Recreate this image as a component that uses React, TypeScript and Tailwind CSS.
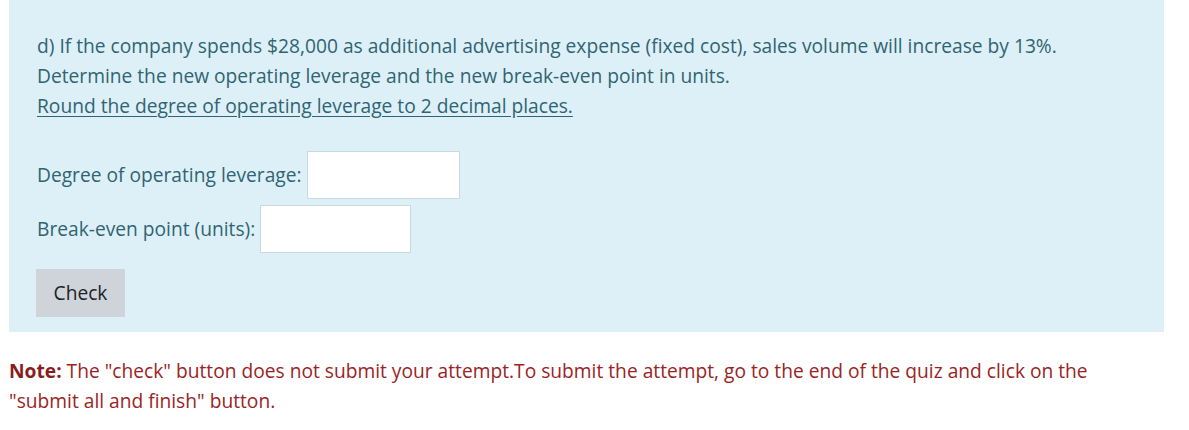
import React from 'react';

const App: React.FC = () => {
  return (
    <div className="w-[1189px] h-[430px] bg-white text-[19.2px]" style={{ fontFamily: '"Segoe UI", "Open Sans", sans-serif' }}>
      <div className="ml-[9px] w-[1155px] h-[332px] bg-[#def0f7] text-[#2f6473] pl-[28px] pt-[31px]">
        <p className="leading-[30px]">d) If the company spends $28,000 as additional advertising expense (fixed cost), sales volume will increase by 13%.</p>
        <p className="leading-[30px]">Determine the new operating leverage and the new break-even point in units.</p>
        <p className="leading-[30px] underline underline-offset-[3px]">Round the degree of operating leverage to 2 decimal places.</p>

        <div className="mt-[30px] flex items-center gap-[5px]">
          <span>Degree of operating leverage:</span>
          <input type="text" className="w-[153px] h-[48px] bg-white border border-[#c8d9df] outline-none" />
        </div>
        <div className="mt-[6px] flex items-center gap-[5px]">
          <span>Break-even point (units):</span>
          <input type="text" className="w-[151px] h-[48px] bg-white border border-[#c8d9df] outline-none" />
        </div>
        <button className="mt-[16px] -ml-px w-[89px] h-[48px] bg-[#ced4da] text-[#1d2125]">Check</button>
      </div>

      <p className="ml-[9px] mt-[24px] text-[#9a2424] leading-[30px] w-[1110px]">
        <strong className="text-[#8a1c1c]">Note:</strong> The "check" button does not submit your attempt.To submit the attempt, go to the end of the quiz and click on the "submit all and finish" button.
      </p>
    </div>
  );
};

export default App;
